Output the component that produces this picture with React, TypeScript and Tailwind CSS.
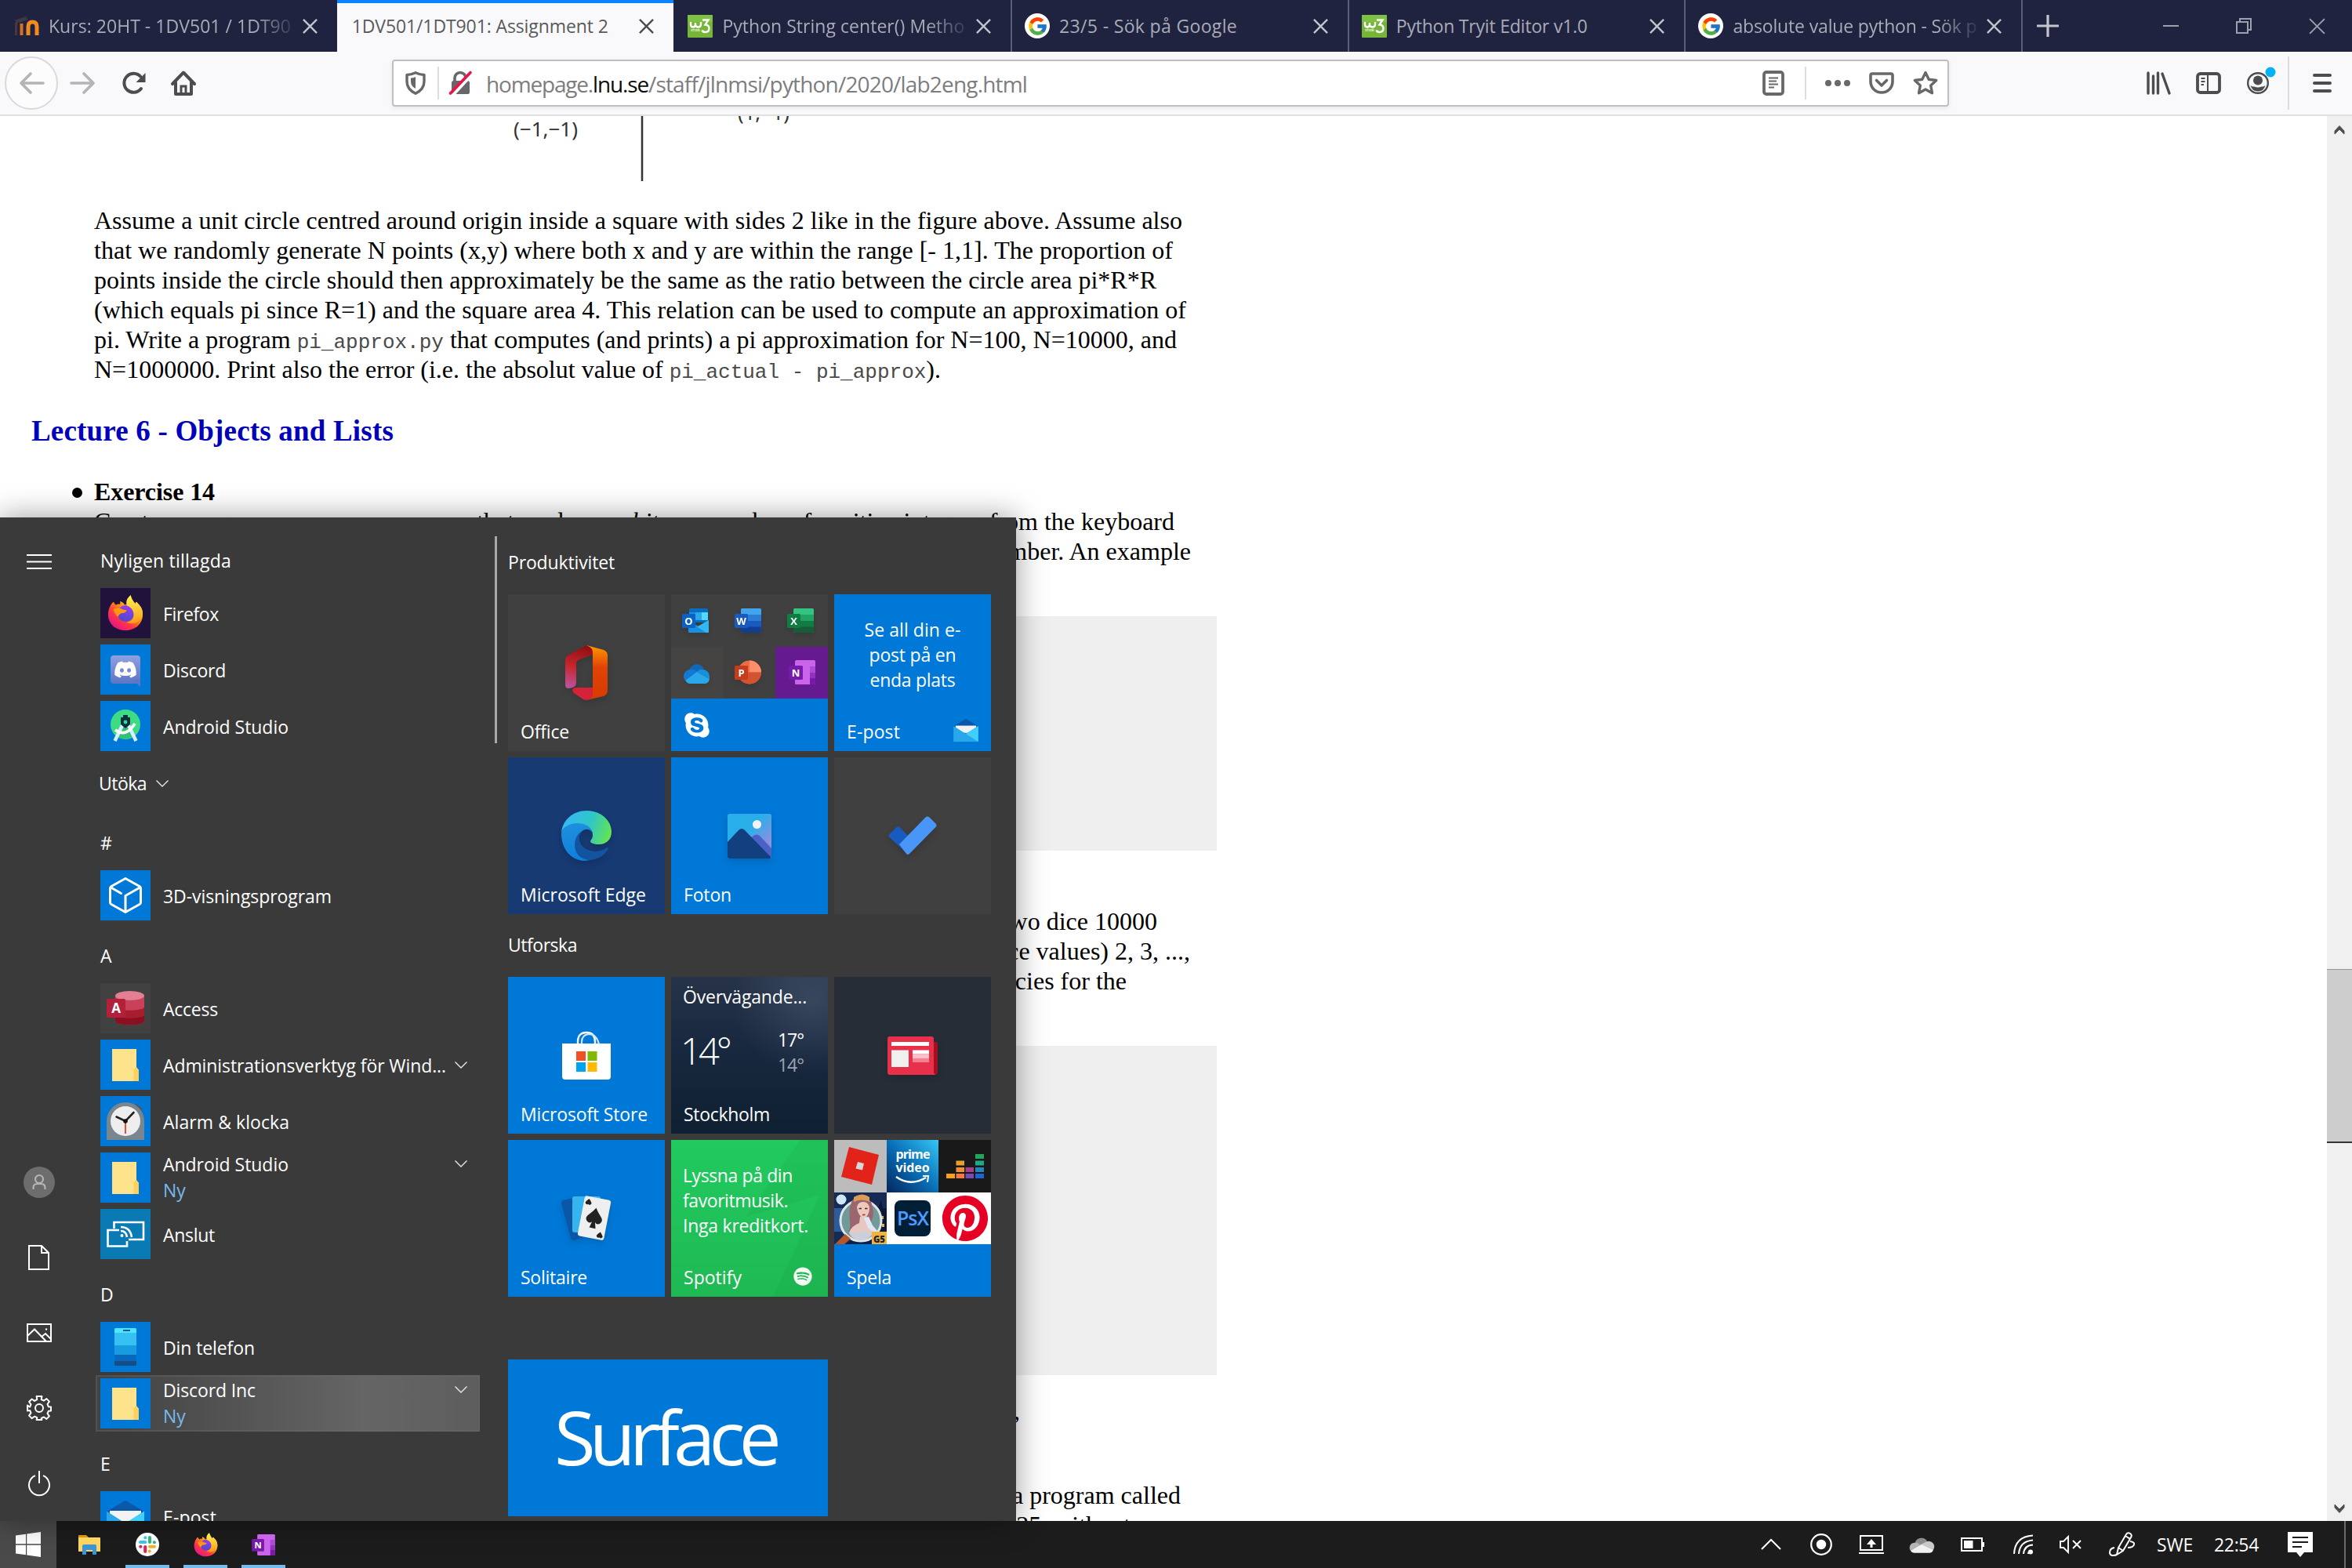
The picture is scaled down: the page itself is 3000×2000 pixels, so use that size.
import React, { useLayoutEffect, useRef, useState } from "react";
import { FcGoogle } from "react-icons/fc";
import { FaDiscord, FaPinterest, FaSkype, FaSpotify } from "react-icons/fa6";

type Kids = { children?: React.ReactNode };

/* Text whose letter spacing is adjusted so that it fills a known width. */
function Fit({ w, className = "", children }: Kids & { w: number; className?: string }) {
  const ref = useRef<HTMLSpanElement>(null);
  const [spacing, setSpacing] = useState(0);
  useLayoutEffect(() => {
    const el = ref.current;
    if (!el) return;
    const n = (el.textContent || "").length;
    setSpacing((w - el.getBoundingClientRect().width) / Math.max(1, n));
  }, [w]);
  return (
    <span ref={ref} className={`inline-block whitespace-pre ${className}`} style={{ letterSpacing: spacing }}>
      {children}
    </span>
  );
}

function Ico({ w, h, vb, className = "", children }: Kids & { w: number; h: number; vb?: string; className?: string }) {
  return (
    <svg width={w} height={h} viewBox={vb || `0 0 ${w} ${h}`} fill="none" className={`block shrink-0 overflow-visible ${className}`}>
      {children}
    </svg>
  );
}

/* ---------- logos ---------- */

function Firefox({ s, id }: { s: number; id: string }) {
  return (
    <Ico w={s} h={s} vb="0 0 48 48">
      <defs>
        <linearGradient id={id + "a"} x1="40" y1="4" x2="10" y2="44" gradientUnits="userSpaceOnUse">
          <stop offset="0.05" stopColor="#fff44f" />
          <stop offset="0.4" stopColor="#ff980e" />
          <stop offset="0.7" stopColor="#ff3647" />
          <stop offset="1" stopColor="#e31587" />
        </linearGradient>
        <linearGradient id={id + "b"} x1="30" y1="10" x2="22" y2="36" gradientUnits="userSpaceOnUse">
          <stop stopColor="#b833e1" />
          <stop offset="0.5" stopColor="#7542e5" />
          <stop offset="1" stopColor="#4a4ac8" />
        </linearGradient>
        <linearGradient id={id + "c"} x1="36" y1="0" x2="38" y2="40" gradientUnits="userSpaceOnUse">
          <stop stopColor="#fff44f" />
          <stop offset="0.6" stopColor="#ffbd2f" />
          <stop offset="1" stopColor="#ff980e" />
        </linearGradient>
      </defs>
      <path d="M8 9c1 1 2 3 3 4 2-1 4-1 6-1l0-4c3 1 5 3 6 5 5-2 9 0 12 4l3-8c6 5 9 11 9 17 0 12-10 21-23 21S1 38 1 26C1 19 4 12 8 9z" fill={`url(#${id}a)`} />
      <circle cx="24.500" cy="24.500" r="11" fill={`url(#${id}b)`} />
      <path d="M31 0c-5 4-7 9-5 14 5 2 9 6 9 12 0 7-5 10-10 10 10 5 22-1 22-12 0-8-5-11-8-15-1 0-1 2-1 3-3-3-6-7-7-12z" fill={`url(#${id}c)`} />
      <path d="M8 19c4-2 9-2 12 0 3 1 5 1 6 1-1 3-4 4-7 4-3 1-4 3-5 5-3-2-5-6-6-10z" fill="#ff980e" />
    </Ico>
  );
}

function OfficeApp({ letter, dark, tones, round }: { letter: string; dark: string; tones: string[]; round?: boolean }) {
  return (
    <Ico w={34} h={31} className="drop-shadow-md">
      {round ? (
        <>
          <circle cx="19" cy="15.500" r="15" fill={tones[0]} />
          <path d="M19 .5a15 15 0 0 1 15 15H19z" fill={tones[1]} />
          <path d="M4 15.500a15 15 0 0 0 30 0z" fill={tones[2]} />
        </>
      ) : (
        <>
          <rect x="8" y="0" width="26" height="31" rx="1.500" fill={tones[0]} />
          <rect x="8" y="8" width="26" height="8" fill={tones[1]} />
          <rect x="8" y="16" width="26" height="8" fill={tones[2]} />
          <rect x="8" y="23.500" width="26" height="7.500" rx="1.500" fill={tones[3]} />
        </>
      )}
      <rect x="0" y="7" width="17" height="18" rx="1.500" fill={dark} />
      <text x="8.500" y="20.800" textAnchor="middle" fontFamily="Open Sans, sans-serif" fontSize="13" fontWeight="700" fill="#fff">
        {letter}
      </text>
    </Ico>
  );
}

function Outlook() {
  return (
    <Ico w={34} h={31} className="drop-shadow-md">
      <rect x="9" y="0" width="24" height="18" rx="1.500" fill="#0a6cbd" />
      <path d="M9 5h8v10H9z" fill="#1490df" />
      <path d="M17 5h8v10h-8z" fill="#28a8ea" />
      <path d="M25 5h8v10h-8z" fill="#50d9ff" />
      <path d="M8 15 21 23 34 15v14.500q0 1.500-1.500 1.500H9.500Q8 31 8 29.500z" fill="#1a8fe0" />
      <path d="M34 15v14.500q0 1.500-1.500 1.500H31L19 23.500z" fill="#35b8f1" />
      <rect x="0" y="7" width="17" height="18" rx="1.500" fill="#0a62c4" />
      <text x="8.500" y="20.800" textAnchor="middle" fontFamily="Open Sans, sans-serif" fontSize="13" fontWeight="700" fill="#fff">
        O
      </text>
    </Ico>
  );
}

function OneNote({ w, h }: { w: number; h: number }) {
  return (
    <Ico w={w} h={h} vb="0 0 34 31">
      <rect x="8" y="0" width="26" height="31" rx="1.500" fill="#ca64ea" />
      <path d="M27 8h7v8h-7z" fill="#ae4bd5" />
      <path d="M27 16h7v7h-7z" fill="#9332bf" />
      <path d="M27 23h7v6.500q0 1.500-1.500 1.500H27z" fill="#7719aa" />
      <rect x="0" y="7" width="18" height="18" rx="1.500" fill="#7719aa" />
      <text x="9" y="20.800" textAnchor="middle" fontFamily="Open Sans, sans-serif" fontSize="13" fontWeight="700" fill="#fff">
        N
      </text>
    </Ico>
  );
}

function Mail({ w, h }: { w: number; h: number }) {
  return (
    <Ico w={w} h={h} vb="0 0 48 44">
      <path d="M0 14 24 0l24 14v6H0z" fill="#0b57a8" />
      <path d="M4 13h40v14H4z" fill="#f3f3f3" />
      <path d="M0 13.500 24 29 48 13.500V44H0z" fill="#28a8ea" />
      <path d="M48 13.500 24 29l24 15z" fill="#3fd0fa" />
    </Ico>
  );
}

function Cloud({ w, h, tones }: { w: number; h: number; tones: string[] }) {
  return (
    <Ico w={w} h={h} vb="0 0 34 23">
      <path d="M8 10a9 9 0 0 1 17-2l-9 6z" fill={tones[0]} />
      <path d="M7 9a7 7 0 0 0-5 11l15-7-6-4z" fill={tones[1]} />
      <path d="M24 7.500a7.500 7.500 0 0 1 9 11l-17-7z" fill={tones[2]} />
      <path d="M2 20 17 11.500l16 7A6 6 0 0 1 27 23H7q-3 0-5-3z" fill={tones[3]} />
    </Ico>
  );
}

function Folder() {
  return (
    <Ico w={34} h={42}>
      <path d="M0 1h31v23l3 4v14H0z" fill="#ffe597" />
      <path d="M0 1h31v41H0z" fill="#ffe28c" />
      <path d="M27.500 42V28l2.500-4 4 4v14z" fill="#ffd05c" />
    </Ico>
  );
}

function W3() {
  return (
    <Ico w={32} h={29}>
      <rect width="32" height="29" rx="1" fill="#76b538" />
      <rect width="32" height="9" rx="1" fill="#7fc142" />
      <path d="M4 9v3q0 3.500 3 3.500t3-3.500v-2 2q0 3.500 3.500 3.500T17 12V9M19 6.500h7.500l-4 6q5 .5 5 4.500 0 5-5 5-3 0-4-2.500" stroke="#fff" strokeWidth="2.400" />
      <text x="4" y="21" fontFamily="Open Sans, sans-serif" fontSize="4.500" fill="#fff" textLength="12">
        schools
      </text>
    </Ico>
  );
}

const GoogleIcon = () => (
  <span className="flex size-8 items-center justify-center rounded-full bg-white">
    <FcGoogle size={27} />
  </span>
);

const Moodle = () => (
  <Ico w={32} h={24}>
    <path d="M2.500 24V11q0-4 3-6" stroke="#5a4340" strokeWidth="3" opacity=".7" />
    <path d="M0 5 15 0l3 4-11 4z" fill="#3b3744" />
    <path d="M9.500 24V9" stroke="#d9701f" strokeWidth="4" />
    <path d="M18 24V13q0-6 5.500-6t5.500 6v11" stroke="#f28a1d" strokeWidth="5" />
  </Ico>
);

/* ---------- browser ---------- */

const Cross = ({ c, s = 19, sw = 2.5 }: { c: string; s?: number; sw?: number }) => (
  <Ico w={s} h={s} vb="0 0 20 20">
    <path d="M1 1l18 18M19 1 1 19" stroke={c} strokeWidth={sw} />
  </Ico>
);

function Tab({ icon, text, w, active, sep, fade }: { icon?: React.ReactNode; text: string; w: number; active?: boolean; sep?: boolean; fade?: boolean }) {
  return (
    <div
      className={
        "relative flex h-full w-[429.7px] shrink-0 items-center " +
        (active ? "border-t-4 border-[#0a84ff] bg-[#f9f9fb] pb-1 pl-[19px] text-[#5a5a5c]" : "pl-[18px] text-[#aaaab8]")
      }
    >
      {sep && <div className="absolute left-0 top-0 h-full w-[2px] bg-[#5c5e78]" />}
      {icon && <div className="mr-3 flex w-8 shrink-0 justify-center">{icon}</div>}
      <div className={"w-[332px] " + (fade ? "[mask-image:linear-gradient(to_right,black_79%,transparent_96%)]" : "")}>
        <Fit w={w}>{text}</Fit>
      </div>
      <div className="absolute right-[25px]">
        <Cross c={active ? "#4c4c4e" : "#c4c4cd"} />
      </div>
    </div>
  );
}

function TabBar() {
  return (
    <div className="flex h-[66px] shrink-0 items-center bg-[#20233f] text-[23px] leading-8">
      <Tab icon={<Moodle />} text="Kurs: 20HT - 1DV501 / 1DT90" w={309} fade />
      <Tab text="1DV501/1DT901: Assignment 2" w={327} active />
      <Tab icon={<W3 />} text="Python String center() Metho" w={309} fade />
      <Tab icon={<GoogleIcon />} text="23/5 - Sök på Google" w={227} sep />
      <Tab icon={<W3 />} text="Python Tryit Editor v1.0" w={244} sep />
      <Tab icon={<GoogleIcon />} text="absolute value python - Sök p" w={311} sep fade />
      <div className="relative flex h-full flex-1 items-center border-l-2 border-[#5c5e78] pl-[18px]">
        <Ico w={28} h={28}>
          <path d="M14 0v28M0 14h28" stroke="#c4c4cd" strokeWidth="3.200" />
        </Ico>
        <div className="ml-auto flex items-center gap-[73px] pr-[34px]">
          <Ico w={20} h={20}>
            <path d="M0 10h20" stroke="#9fa0ae" strokeWidth="2" />
          </Ico>
          <Ico w={20} h={20}>
            <path d="M1 5h14v14H1zM5 5V1h14v14h-4" stroke="#9fa0ae" strokeWidth="2" />
          </Ico>
          <Cross c="#9fa0ae" s={21} sw={1.8} />
        </div>
      </div>
    </div>
  );
}

const G = "#4c4c4e";
const H = "#68686a";

function NavBar() {
  return (
    <div className="flex h-[82px] shrink-0 items-center border-b-2 border-[#e0e0e1] bg-[#f9f9fb]">
      <div className="ml-[6px] flex size-[68px] items-center justify-center rounded-full border-2 border-[#d9d9dc] bg-[#fcfcfd]">
        <Ico w={32} h={28}>
          <path d="M31 14H3M15 2 3 14l12 12" stroke="#b4b4b7" strokeWidth="3.600" strokeLinecap="round" strokeLinejoin="round" />
        </Ico>
      </div>
      <Ico w={32} h={28} className="ml-4">
        <path d="M1 14h28M17 2l12 12-12 12" stroke="#b4b4b7" strokeWidth="3.600" strokeLinecap="round" strokeLinejoin="round" />
      </Ico>
      <Ico w={30} h={28} className="ml-[34px]">
        <path d="M24 21A12 12 0 1 1 23.500 6" stroke={G} strokeWidth="4" strokeLinecap="round" />
        <path d="M29.500 1v12h-12z" fill={G} />
      </Ico>
      <Ico w={32} h={32} className="ml-8">
        <path d="M2 17 16 2.500 30 17M6 15v15h20V15" stroke={G} strokeWidth="4" strokeLinecap="round" strokeLinejoin="round" />
        <path d="M13 31V20h6v11" stroke={G} strokeWidth="3" />
      </Ico>
      <div className="ml-[250px] flex h-[60px] w-[1986px] items-center rounded-[4px] border-2 border-[#bfbfc1] bg-white shadow-[0_2px_6px_rgba(0,0,0,0.08)]">
        <Ico w={26} h={30} className="ml-[15px]">
          <path d="M13 1.800Q19 4.500 24 4.500V13q0 10-11 15.200Q2 23 2 13V4.500q5 0 11-2.700z" stroke={H} strokeWidth="3.400" strokeLinejoin="round" />
          <path d="M13 7v15q-6-3-6-9V8.500q3 0 6-1.500z" fill={H} />
        </Ico>
        <div className="ml-[15px] h-[42px] w-[2px] bg-[#dedee0]" />
        <Ico w={30} h={32} className="ml-[13px]">
          <path d="M7 15V9.500a7 7 0 0 1 14 0V15" stroke={H} strokeWidth="3.600" />
          <rect x="3" y="13" width="23" height="17" rx="2.500" fill={H} />
          <path d="M4 32 29 5" stroke="#fff" strokeWidth="4" />
          <path d="M1.500 29 27 2.500" stroke="#e8154a" strokeWidth="3.600" strokeLinecap="round" />
        </Ico>
        <div className="ml-[17px] pt-[2px] text-[28px] leading-10 text-[#7d7d80]">
          <Fit w={136}>homepage.</Fit>
          <Fit w={71} className="text-[#0c0c0d]">
            lnu.se
          </Fit>
          <Fit w={483}>/staff/jlnmsi/python/2020/lab2eng.html</Fit>
        </div>
        <div className="ml-auto flex items-center">
          <Ico w={28} h={32}>
            <rect x="2" y="2" width="24" height="28" rx="3" stroke={H} strokeWidth="3.800" />
            <path d="M8 9.500h12M8 13.500h10M8 17.500h12M8 21.500h7" stroke={H} strokeWidth="2" />
          </Ico>
          <div className="ml-[26px] h-[42px] w-[2px] bg-[#dedee0]" />
          <Ico w={32} h={8} className="ml-6">
            <circle cx="4" cy="4" r="4" fill={H} />
            <circle cx="16" cy="4" r="4" fill={H} />
            <circle cx="28" cy="4" r="4" fill={H} />
          </Ico>
          <Ico w={32} h={28} className="ml-6">
            <path d="M4 2h24q2 0 2 2v8a14 14 0 0 1-28 0V4q0-2 2-2z" stroke={H} strokeWidth="3.600" />
            <path d="M9.500 10.500 16 17l6.500-6.500" stroke={H} strokeWidth="3.600" strokeLinecap="round" strokeLinejoin="round" />
          </Ico>
          <Ico w={32} h={32} className="ml-6 mr-3">
            <path d="m16 2.500 4.200 8.700 9.500 1.300-7 6.600 1.800 9.600L16 24l-8.500 4.700 1.800-9.600-7-6.600 9.500-1.300z" stroke={H} strokeWidth="3.400" strokeLinejoin="round" />
          </Ico>
        </div>
      </div>
      <div className="ml-auto flex items-center">
        <Ico w={31} h={28}>
          <path d="M2 1v26M8.500 5v22M14.500 1v26M20 2l9 25" stroke={G} strokeWidth="3.400" strokeLinecap="round" />
        </Ico>
        <Ico w={32} h={28} className="ml-8">
          <rect x="2" y="2" width="28" height="24" rx="3.500" stroke={G} strokeWidth="3.800" />
          <path d="M15 3v22" stroke={G} strokeWidth="2" />
          <path d="M6.500 8h5M6.500 12h5M6.500 16h3.500" stroke={G} strokeWidth="2" />
        </Ico>
        <Ico w={30} h={28} className="ml-[33px]">
          <circle cx="14" cy="14" r="12.800" stroke={G} strokeWidth="2.400" />
          <circle cx="14" cy="10.500" r="6" fill={G} />
          <path d="M4.500 17q3 2 5 1.500 4.500 2 9 0 2 .5 5-1.500-2 7.500-9.500 7.500T4.500 17z" fill={G} />
          <circle cx="30" cy="0" r="6.500" fill="#00b3f4" />
        </Ico>
        <div className="ml-[22px] h-[68px] w-[2px] bg-[#dcdcde]" />
        <Ico w={24} h={26} className="ml-[30px] mr-[26px]">
          <path d="M2 3h20M2 13h20M2 23h20" stroke={G} strokeWidth="4" strokeLinecap="round" />
        </Ico>
      </div>
    </div>
  );
}

const Code = ({ children }: Kids) => <code className="font-['Liberation_Mono',monospace] text-[26px] leading-none text-[#4a4a4a]">{children}</code>;

function Page() {
  return (
    <div className="flex min-h-0 flex-1 bg-white">
      <div className="flex-1 overflow-hidden font-['Liberation_Serif',serif] text-[32px] leading-[38px] text-black">
        <Ico w={1100} h={114} className="overflow-hidden!">
          <text x="655" y="26" fontFamily="Noto Sans, sans-serif" fontSize="25" textLength="82" lengthAdjust="spacingAndGlyphs" fill="#333">
            (−1,−1)
          </text>
          <text x="941" y="5" fontFamily="Noto Sans, sans-serif" fontSize="25" textLength="66" lengthAdjust="spacingAndGlyphs" fill="#333">
            (1,−1)
          </text>
          <path d="M819 0v83" stroke="#333" strokeWidth="2.500" />
        </Ico>
        <div className="ml-[120px]">
          <div className="h-[38px]"><Fit w={1388}>Assume a unit circle centred around origin inside a square with sides 2 like in the figure above. Assume also</Fit></div>
          <div className="h-[38px]"><Fit w={1376}>that we randomly generate N points (x,y) where both x and y are within the range [- 1,1]. The proportion of</Fit></div>
          <div className="h-[38px]"><Fit w={1355}>points inside the circle should then approximately be the same as the ratio between the circle area pi*R*R</Fit></div>
          <div className="h-[38px]"><Fit w={1393}>(which equals pi since R=1) and the square area 4. This relation can be used to compute an approximation of</Fit></div>
          <div className="h-[38px]"><Fit w={1381}>pi. Write a program <Code>pi_approx.py</Code> that computes (and prints) a pi approximation for N=100, N=10000, and</Fit></div>
          <div className="h-[38px]"><Fit w={1080}>N=1000000. Print also the error (i.e. the absolut value of <Code>pi_actual - pi_approx</Code>).</Fit></div>
        </div>
        <h2 className="mb-[36px] ml-10 mt-[38px] h-[44px] text-[37px] font-bold leading-[44px] text-[#0000bb]"><Fit w={462}>Lecture 6 - Objects and Lists</Fit></h2>
        <div className="ml-[92px] flex h-[38px] items-center">
          <div className="mt-[3px] size-[13px] rounded-full bg-black" />
          <b className="ml-[15px]"><Fit w={154}>Exercise 14</Fit></b>
        </div>
        <div className="ml-[120px] flex h-[38px] w-[1378px] justify-between">
          <span>Create a program</span>
          <Fit w={890}>that reads an <i>arbitrary</i> number of positive integers from the keyboard</Fit>
        </div>
        <div className="ml-[120px] h-[38px] w-[1399px] text-right">number. An example</div>
        <div className="ml-[120px] mt-[64px] h-[299px] w-[1432px] bg-[#efefef]" />
        <div className="ml-[120px] mt-[71px] h-[38px] w-[1356px] text-right">two dice 10000</div>
        <div className="ml-[120px] h-[38px] w-[1398px] text-right">dice values) 2, 3, ...,</div>
        <div className="ml-[120px] h-[38px] w-[1317px] text-right">frequencies for the</div>
        <div className="ml-[120px] mt-[64px] h-[420px] w-[1432px] bg-[#efefef]" />
        <div className="ml-[120px] mt-[26px] h-[38px] w-[1181px] text-right">,</div>
        <div className="ml-[120px] mt-[70px] h-[38px] w-[1386px] text-right">a program called</div>
        <div className="ml-[120px] h-[38px] w-[1322px] text-right">35, without</div>
      </div>
      <div className="flex w-8 flex-col items-center bg-[#f0f0f0]">
        <Ico w={14} h={12} className="mt-[12px]">
          <path d="M1 11V7l6-6.500L13 7v4L7 5z" fill="#505050" stroke="#505050" />
        </Ico>
        <div className="mt-[1064px] h-[222px] w-8 border-b-2 border-t border-b-[#333] border-t-[#999] bg-[#cdcdcd]" />
        <Ico w={14} h={12} className="mt-auto mb-[10px]">
          <path d="M1 1v4l6 6.500L13 5V1L7 7z" fill="#505050" stroke="#505050" />
        </Ico>
      </div>
    </div>
  );
}

/* ---------- start menu ---------- */

function Rail() {
  return (
    <div className="flex w-[100px] shrink-0 flex-col items-center">
      <Ico w={32} h={20} className="mt-[46px]">
        <path d="M0 2h32M0 10.500h32M0 19h32" stroke="#fff" strokeWidth="2" />
      </Ico>
      <div className="mt-auto flex flex-col items-center">
        <div className="flex h-24 items-center">
          <div className="flex size-10 items-center justify-center rounded-full bg-[#6d6d6d]">
            <Ico w={18} h={20}>
              <circle cx="9" cy="6" r="5" stroke="#b5b5b5" strokeWidth="2.200" />
              <path d="M1.500 19v-2q0-5 5-5h5q5 0 5 5v2" stroke="#b5b5b5" strokeWidth="2.200" />
            </Ico>
          </div>
        </div>
        <div className="flex h-24 items-center">
          <Ico w={28} h={32} className="mr-[2px]">
            <path d="M2 1h16l9 9v21H2zM18 1v9h9" stroke="#fff" strokeWidth="2" />
          </Ico>
        </div>
        <div className="flex h-24 items-center">
          <Ico w={32} h={24}>
            <path d="M1 1h30v22H1zM1 16l9-8.500L25 23M19 17l5-4 7 7" stroke="#fff" strokeWidth="2" />
            <circle cx="25" cy="7.500" r="1.200" fill="#fff" />
          </Ico>
        </div>
        <div className="flex h-24 items-center">
          <Ico w={32} h={32}>
            <path
              d="M13.3 5.100 12.600 1h6.800L18.700 5.100l3.300 1.400 3.400-2.400 3.500 3.500-2.400 3.400 1.400 3.300 3.100.3v4.800l-3.100.3-1.400 3.300 2.400 3.400-3.500 3.500-3.400-2.400-3.300 1.400L19.400 31h-6.800l.7-2.900-3.300-1.400-3.400 2.400-3.500-3.500 2.400-3.400-1.400-3.300L1 19.400v-6.800l3.100 2.100 1.400-3.300-2.400-3.400 3.500-3.500 3.400 2.400z"
              stroke="#fff"
              strokeWidth="2"
              strokeLinejoin="round"
            />
            <circle cx="16" cy="16" r="5" stroke="#fff" strokeWidth="2" />
          </Ico>
        </div>
        <div className="flex h-24 items-center">
          <Ico w={28} h={32}>
            <path d="M9 6.200a13 13 0 1 0 10 0M14 0v16" stroke="#fff" strokeWidth="2" />
          </Ico>
        </div>
      </div>
    </div>
  );
}

const Chevron = () => (
  <Ico w={16} h={9}>
    <path d="M.5.5 8 8 15.500.5" stroke="#e8e8e8" strokeWidth="1.400" />
  </Ico>
);

function Letter({ children, w }: { children: string; w: number }) {
  return (
    <div className="flex h-[72px] shrink-0 items-center pt-[10px]">
      <Fit w={w}>{children}</Fit>
    </div>
  );
}

function AppRow({ icon, name, w, bg = "bg-[#0078d7]", sub, chevron, hover }: { icon: React.ReactNode; name: string; w: number; bg?: string; sub?: string; chevron?: boolean; hover?: boolean }) {
  return (
    <div
      className={
        "-ml-[6px] flex h-[72px] w-[490px] shrink-0 items-center pl-[6px] " +
        (hover ? "bg-linear-to-r from-[#424242] via-[#656565] via-70% to-[#5d5d5d] shadow-[inset_0_0_0_2px_rgba(110,110,110,0.35)]" : "")
      }
    >
      <div className={"flex size-16 shrink-0 items-center justify-center overflow-hidden " + bg}>{icon}</div>
      <div className={"ml-4 flex flex-col leading-[33px] " + (sub ? "" : "pt-[2px]")}>
        <Fit w={w}>{name}</Fit>
        {sub && <span className="text-[#76b9ed]">{sub}</span>}
      </div>
      {chevron && (
        <div className={"ml-auto mr-4 " + (sub ? "mb-9" : "")}>
          <Chevron />
        </div>
      )}
    </div>
  );
}

function AppList() {
  return (
    <div className="flex w-[531px] shrink-0 flex-col overflow-hidden pl-7 pt-[14px]">
      <Letter w={167}>Nyligen tillagda</Letter>
      <AppRow icon={<Firefox s={46} id="m" />} bg="bg-[#20123a]" name="Firefox" w={71} />
      <AppRow
        icon={
          <div className="relative flex h-9 w-[38px] items-center justify-center rounded-[4px] bg-linear-to-b from-[#8ea1e1] to-[#5f74c4]">
            <FaDiscord size={30} color="#fff" />
            <Ico w={10} h={9} className="absolute -bottom-[4px] right-0">
              <path d="M0 0h10v9z" fill="#5f74c4" />
            </Ico>
          </div>
        }
        name="Discord"
        w={80}
      />
      <AppRow
        icon={
          <Ico w={40} h={42}>
            <circle cx="20" cy="19" r="19" fill="#3ddc84" />
            <path d="M20 10 8 34q12 8 24-2z" fill="#2fae71" opacity=".6" />
            <path d="M17 18 6.500 40M23 18l10.500 22" stroke="#d7effe" strokeWidth="4.500" />
            <path d="M7 26q14 10 25-8" stroke="#fff" strokeWidth="3.600" />
            <path d="M14 10h3V7h6v3h3v9l-6 5-6-5z" fill="#073042" />
            <circle cx="20" cy="16" r="2.400" fill="#3ddc84" />
          </Ico>
        }
        name="Android Studio"
        w={160}
      />
      <div className="flex h-[72px] shrink-0 items-center pt-[2px]">
        <Fit w={61} className="-ml-[2px]">Utöka</Fit>
        <div className="ml-[12px]">
          <Chevron />
        </div>
      </div>
      <Letter w={14}>#</Letter>
      <AppRow
        icon={
          <Ico w={42} h={48}>
            <path d="M21 2.500 39 12.500q1.500 1 1.500 2.500v18q0 1.500-1.500 2.500L21 45.500 3 35.500Q1.500 34.500 1.500 33V15q0-1.500 1.500-2.500zM2.500 14l13 7.500M39.500 14 21 24.500V45" stroke="#fff" strokeWidth="3" strokeLinecap="round" strokeLinejoin="round" />
          </Ico>
        }
        name="3D-visningsprogram"
        w={215}
      />
      <Letter w={16}>A</Letter>
      <AppRow
        bg="bg-[#414141]"
        icon={
          <Ico w={48} h={46}>
            <path d="M11 7v32c0 7 37 7 37 0V7z" fill="#c8405a" />
            <path d="M11 22c5 5 32 5 37 0v17c0 7-37 7-37 0z" fill="#a81c30" />
            <path d="M11 32c5 5 32 5 37 0v7c0 7-37 7-37 0z" fill="#8a0f22" />
            <ellipse cx="29.500" cy="7" rx="18.500" ry="6" fill="#e27f93" />
            <rect x="0" y="11" width="24" height="24" rx="2" fill="#b2203a" />
            <text x="12" y="29" textAnchor="middle" fontFamily="Open Sans, sans-serif" fontWeight="700" fontSize="17" fill="#fff">A</text>
          </Ico>
        }
        name="Access"
        w={70}
      />
      <AppRow icon={<Folder />} name="Administrationsverktyg för Wind..." w={361} chevron />
      <AppRow
        icon={
          <Ico w={48} h={48}>
            <path d="M38 2 46 8l-4 5-8-7z" fill="#4b5a66" />
            <path d="M0 24a24 24 0 0 1 48 0v24H0z" fill="#79858f" />
            <circle cx="24" cy="24" r="19" fill="#eeeeee" />
            <path d="M24 24v16" stroke="#e0401f" strokeWidth="1.800" />
            <path d="M12.500 18.500 24 24l10.500-11" stroke="#222" strokeWidth="2.600" strokeLinecap="round" />
            <circle cx="24" cy="24" r="2.800" fill="#111" />
          </Ico>
        }
        name="Alarm & klocka"
        w={161}
      />
      <AppRow icon={<Folder />} name="Android Studio" w={160} sub="Ny" chevron />
      <AppRow
        bg="bg-[#0a7ab5]"
        icon={
          <Ico w={48} h={34}>
            <path d="M9.500 10V2h37.500v22H28" stroke="#fff" strokeWidth="2.600" />
            <path d="M16 12H1.500v20.500H26V26" stroke="#fff" strokeWidth="2.600" />
            <circle cx="19.500" cy="19" r="2" fill="#fff" />
            <path d="M18 13q7 0 8 8M18 8q12 0 14 13" stroke="#fff" strokeWidth="2.600" />
          </Ico>
        }
        name="Anslut"
        w={66}
      />
      <Letter w={16}>D</Letter>
      <AppRow
        icon={
          <Ico w={28} h={48}>
            <rect width="28" height="48" rx="1.500" fill="#50e6ff" />
            <path d="M0 6h28v16H0z" fill="#35c1f1" />
            <path d="M0 22h28v12H0z" fill="#199be2" />
            <path d="M0 34h28v8H0z" fill="#0669bc" />
            <path d="M0 42h28v6H0z" fill="#154d86" />
            <path d="M11 3h9" stroke="#185a97" strokeWidth="2" />
          </Ico>
        }
        name="Din telefon"
        w={117}
      />
      <AppRow icon={<Folder />} name="Discord Inc" w={118} sub="Ny" chevron hover />
      <Letter w={13}>E</Letter>
      <AppRow icon={<div className="pt-1"><Mail w={48} h={44} /></div>} name="E-post" w={68} />
    </div>
  );
}

function Tile({ bg = "bg-[#0078d7]", label, w = 0, children }: Kids & { bg?: string; label?: string; w?: number }) {
  return (
    <div className={"relative size-[200px] overflow-hidden " + bg}>
      {children}
      {label && (
        <div className="absolute bottom-[9px] left-4 leading-8">
          <Fit w={w}>{label}</Fit>
        </div>
      )}
    </div>
  );
}

const Center = ({ children }: Kids) => <div className="flex size-full items-center justify-center">{children}</div>;
const Cell = ({ bg = "", children }: Kids & { bg?: string }) => <div className={"flex items-center justify-center overflow-hidden " + bg}>{children}</div>;

function Productivity() {
  return (
    <div className="grid grid-cols-[200px_200px_200px] gap-2">
      <Tile bg="bg-[#404040]" label="Office" w={62}>
        <Center>
          <Ico w={56} h={70} className="drop-shadow-lg">
            <defs>
              <linearGradient id="ofA" x1="20" y1="0" x2="5" y2="56" gradientUnits="userSpaceOnUse">
                <stop stopColor="#8f0f12" />
                <stop offset="0.5" stopColor="#c8262c" />
                <stop offset="1" stopColor="#b957a8" />
              </linearGradient>
              <linearGradient id="ofB" x1="45" y1="0" x2="45" y2="70" gradientUnits="userSpaceOnUse">
                <stop stopColor="#ff9a00" />
                <stop offset="0.4" stopColor="#e04305" />
                <stop offset="1" stopColor="#d83b01" />
              </linearGradient>
            </defs>
            <path d="M28 0 4 13q-3 2-3 6v31q0 5 4 5 10-1 10-7V24q0-4 4-6l17-6V3z" fill="url(#ofA)" />
            <path d="M28 0 50 6q5 2 5 7v44q0 6-5 8l-22 5q8-3 8-9V9q0-6-8-9z" fill="url(#ofB)" />
            <path d="M11 55q2-1 5-1h20v7q0 8-8 9-2 0-4-1l-12-8q-3-3-1-6z" fill="#d6213a" />
          </Ico>
        </Center>
      </Tile>
      <Tile>
        <div className="grid size-full grid-cols-3 grid-rows-3">
          <Cell bg="bg-[#404040] pr-1"><Outlook /></Cell>
          <Cell bg="bg-[#404040] pr-1"><OfficeApp letter="W" dark="#185abd" tones={["#41a5ee", "#2b7cd3", "#185abd", "#103f91"]} /></Cell>
          <Cell bg="bg-[#404040] pr-1"><OfficeApp letter="X" dark="#107c41" tones={["#33c481", "#21a366", "#107c41", "#185c37"]} /></Cell>
          <Cell bg="bg-[#454443]">
            <Ico w={34} h={29} className="drop-shadow-md">
              <path d="M7 13a10 10 0 0 1 19-3q-6 0-9 5z" fill="#0f68b8" />
              <path d="M8 11q5-1 11 4L2 25Q-1 22 .500 17 2 12 8 11z" fill="#1478d0" />
              <path d="M17 14q5-6 11-2 6 3 5 11l-16-9z" fill="#1490df" />
              <path d="m17 14 16 9q-1 6-7 6H7q-3-1-5-4z" fill="#28a8ea" />
            </Ico>
          </Cell>
          <Cell bg="bg-[#404040] pr-1"><OfficeApp letter="P" dark="#c43e1c" round tones={["#ed6c47", "#ff8f6b", "#d35230"]} /></Cell>
          <Cell bg="bg-[#651a8f]"><OneNote w={34} h={31} /></Cell>
          <Cell><FaSkype size={36} color="#fff" /></Cell>
        </div>
      </Tile>
      <Tile label="E-post" w={68}>
        <div className="flex flex-col items-center pt-[29px] leading-8">
          <Fit w={123}>Se all din e-</Fit>
          <Fit w={111}>post på en</Fit>
          <Fit w={109}>enda plats</Fit>
        </div>
        <div className="absolute bottom-[12px] right-4"><Mail w={32} h={29} /></div>
      </Tile>
      <Tile bg="bg-[#173a73]" label="Microsoft Edge" w={160}>
        <Center>
          <Ico w={64} h={64} className="drop-shadow-lg">
            <defs>
              <linearGradient id="edA" x1="4" y1="16" x2="62" y2="36" gradientUnits="userSpaceOnUse">
                <stop stopColor="#35b9f1" />
                <stop offset="0.5" stopColor="#2fc6c8" />
                <stop offset="1" stopColor="#66e64a" />
              </linearGradient>
              <linearGradient id="edB" x1="16" y1="14" x2="24" y2="64" gradientUnits="userSpaceOnUse">
                <stop stopColor="#1e90dd" />
                <stop offset="1" stopColor="#0f7fdc" />
              </linearGradient>
            </defs>
            <path d="M0 29C1 12 15 0 32 0c19 0 32 13 32 27 0 10-7 16-16 16-7 0-11-2-11-4 0-1 3-3 3-8 0-8-8-14-20-14C8 17 1 23 0 29z" fill="url(#edA)" />
            <path d="M0 29c1-6 9-13 20-13 10 0 18 4 20 12-3-4-7-5-10-4-6 2-9 10-9 17 2 12 12 18 20 19-3 3-8 4-12 4C12 63 0 49 0 29z" fill="url(#edB)" />
            <path d="M26 26c-5 5-5 19 8 24 9 4 19 1 24-3 2-1 2 1 1 3-5 8-14 13-24 13-11-1-18-9-18-19 0-8 4-15 9-18z" fill="#1254a0" />
          </Ico>
        </Center>
      </Tile>
      <Tile label="Foton" w={61}>
        <Center>
          <Ico w={56} h={57} className="drop-shadow-lg">
            <defs>
              <linearGradient id="ph" x1="0" y1="0" x2="56" y2="57" gradientUnits="userSpaceOnUse">
                <stop offset="0.4" stopColor="#28afea" />
                <stop offset="0.8" stopColor="#8e8fe0" />
              </linearGradient>
              <clipPath id="phc"><rect width="56" height="57" rx="2.500" /></clipPath>
            </defs>
            <g clipPath="url(#phc)">
              <rect width="56" height="57" fill="url(#ph)" />
              <path d="m20 40 13-12q4-3 8 0l15 16v13H20z" fill="#4a62c8" />
              <path d="M0 36 14 21q4-4 8 0l33 34v2H0z" fill="#123f80" />
              <circle cx="37.500" cy="13.500" r="5.500" fill="#f3f3f3" />
            </g>
          </Ico>
        </Center>
      </Tile>
      <Tile bg="bg-[#404040]">
        <Center>
          <Ico w={62} h={50} className="drop-shadow-lg">
            <path d="m1.500 23 9-9q2-2 4 0L36 36 25.500 49 1.500 27q-2-2 0-4z" fill="#185abd" />
            <path d="M14 36 47.500 1.500q2.500-2 5 0l8 8q2 2.500 0 4.500L27 48q-2 2-4 0z" fill="#4a96f8" />
          </Ico>
        </Center>
      </Tile>
    </div>
  );
}

function Game() {
  return (
    <Ico w={67} h={67}>
      <rect width="67" height="67" fill="#152a55" />
      <circle cx="9" cy="9" r="6.500" fill="#cfe6f5" />
      <path d="M0 20h12v30H0z" fill="#2d5c9c" />
      <path d="M50 20h6l4-10 2 10h5v30H50z" fill="#0c1838" />
      <path d="M53 24h3v4h-3zM60 30h3v4h-3zM61 40h3v4h-3z" fill="#e0b84a" />
      <path d="M14 67h53V56H30z" fill="#0f1f45" />
      <circle cx="34" cy="36" r="26" fill="#6f9a98" stroke="#dfe6e8" strokeWidth="3" />
      <path d="M0 67 14 53l7 6-9 8z" fill="#b4562a" />
      <path d="M23 10q12-13 24 2 6 14 0 26l3 12H18q3-4 2-14-2-14 3-26z" fill="#9c6670" />
      <path d="M25 6q11-7 20 0v6q-10-5-20 0z" fill="#d99b55" />
      <path d="M29 19q1-7 8-7t8 8q0 9-7 14-8-5-9-15z" fill="#ecc9ba" />
      <path d="M31.500 20.500h3.500M39 20.500h3.500" stroke="#4a2b2b" strokeWidth="1.400" />
      <path d="M36 28.500h3.500" stroke="#b8303a" strokeWidth="1.600" />
      <path d="M33 31h8l1 8q9 5 9 12-7 10-17 10T19 52q2-9 13-13z" fill="#e6c8c0" />
      <path d="M20 51q8 2 14-1l16 1q-7 10-16 10T20 51z" fill="#c9cfdb" />
      <path d="m38 32 6-1 5 11 7 8-4 3-9-8z" fill="#dfe7f2" />
      <rect x="48" y="50" width="19" height="17" fill="#f3b436" />
      <text x="57.500" y="63.500" textAnchor="middle" fontFamily="Open Sans, sans-serif" fontWeight="800" fontSize="13" textLength="15" lengthAdjust="spacingAndGlyphs" fill="#1b2338">G5</text>
    </Ico>
  );
}

function Explore() {
  return (
    <div className="grid grid-cols-[200px_200px_200px] gap-2">
      <Tile label="Microsoft Store" w={162}>
        <Center>
          <Ico w={62} h={62}>
            <path d="M20 17V14q0-12 11-12t11 12v3" stroke="#fff" strokeWidth="2.400" />
            <path d="M25 17v-3q0-9 9-10 10 0 13 13" stroke="#cfe6fa" strokeWidth="2.200" />
            <path d="M0 16h62v42q0 4-4 4H4q-4 0-4-4z" fill="#fff" />
            <path d="M18 26h12v12H18z" fill="#f25022" />
            <path d="M32.500 26h12v12h-12z" fill="#7fba00" />
            <path d="M18 40h12v12H18z" fill="#00a4ef" />
            <path d="M32.500 40h12v12h-12z" fill="#ffb900" />
          </Ico>
        </Center>
      </Tile>
      <Tile bg="bg-linear-to-b from-[#263349] via-[#17273d] to-[#0f2032]" label="Stockholm" w={110}>
        <div className="absolute inset-0 bg-[radial-gradient(ellipse_at_90%_15%,rgba(110,125,150,0.3),transparent_40%)]" />
        <div className="relative px-[15px] pt-[9px]">
          <div className="leading-8"><Fit w={158}>Övervägande...</Fit></div>
          <div className="mt-[20px] flex justify-between pr-4">
            <Fit w={62} className="-ml-[3px] text-[47px] font-light leading-[66px]">14°</Fit>
            <div className="flex flex-col pt-[3px] leading-8">
              <Fit w={33}>17°</Fit>
              <Fit w={33} className="text-[#9aa3b0]">14°</Fit>
            </div>
          </div>
        </div>
      </Tile>
      <Tile bg="bg-[#262d37]">
        <Center>
          <Ico w={64} h={49} className="drop-shadow-lg">
            <path d="M50 7h12q2 0 2 2v36q0 4-4 4H50z" fill="#a50f22" />
            <path d="M3 0h53q3 0 3 3v42q0 3 3 4H3q-3 0-3-3V3q0-3 3-3z" fill="#e8304a" />
            <path d="M5 7h48v5H5z" fill="#fff" />
            <path d="M5 17.500h22v21.500H5z" fill="#f0f0f0" />
            <path d="M32 17.500h21v5H32z" fill="#fff" />
            <path d="M32 22.500h21v5.500H32z" fill="#fbc0c8" />
            <path d="M32 28h21v5H32z" fill="#f4808f" />
          </Ico>
        </Center>
      </Tile>
      <Tile label="Solitaire" w={85}>
        <Center>
          <Ico w={64} h={56} className="drop-shadow-lg">
            <path d="M2 5 16 2l12 50-13 4q-2 0-3-3L0 9q0-3 2-4z" fill="#0a57a8" />
            <path d="M17 0h30q3 0 3 3v43H17q-3 0-3-3V3q0-3 3-3z" fill="#35b4f0" />
            <g transform="rotate(11 44 28)">
              <rect x="25" y="2" width="34" height="52" rx="3" fill="#efefef" />
              <path d="M42 15q3 5 8 10 4 4 1 8-4 4-7 0l2 8h-8l2-8q-3 4-7 0-3-4 1-8 5-5 8-10z" fill="#222" />
              <path d="M31 5q4 4 4 6-2 3-4 1-2 2-4-1 0-2 4-6zM53 44q4 4 4 6-2 3-4 1-2 2-4-1 0-2 4-6z" fill="#222" />
            </g>
          </Ico>
        </Center>
      </Tile>
      <Tile bg="bg-linear-to-b from-[#21ca5e] to-[#1fb954]" label="Spotify" w={74}>
        <Ico w={200} h={200} className="absolute left-0 top-0">
          <path d="M165 0h35v200h-70l60-130-95 28z" fill="#14a044" opacity=".18" />
        </Ico>
        <div className="relative flex flex-col items-start pl-[15px] pt-[29px] leading-8">
          <Fit w={140}>Lyssna på din</Fit>
          <Fit w={134}>favoritmusik.</Fit>
          <Fit w={160}>Inga kreditkort.</Fit>
        </div>
        <div className="absolute bottom-[14px] right-5"><FaSpotify size={24} color="#f0fbf3" /></div>
      </Tile>
      <Tile label="Spela" w={57}>
        <div className="grid size-full grid-cols-3 grid-rows-3">
          <Cell bg="bg-[#bcbcbc]">
            <Ico w={48} h={48}>
              <path d="m10 0 38 10-9 38L0 38z" fill="#e2231a" />
              <path d="m21 19 8 2-2 8.500-8.500-2z" fill="#d8d8d8" />
            </Ico>
          </Cell>
          <Cell bg="bg-linear-to-tr from-[#04275c] via-[#0a6fb8] to-[#35c8f5] flex-col text-[16px] font-bold leading-[17px] text-white">
            <Fit w={43}>prime</Fit>
            <Fit w={43}>video</Fit>
            <Ico w={44} h={12} className="mt-px">
              <path d="M1 2q18 13 38 1" stroke="#fff" strokeWidth="2.400" />
              <path d="M35 1h7l-1 8" stroke="#fff" strokeWidth="2" />
            </Ico>
          </Cell>
          <Cell bg="bg-[#191919]">
            <Ico w={48} h={31}>
              <path d="M0 25h11v6H0z" fill="#f7a11a" />
              <path d="M12.500 25h10.500v6H12.500z" fill="#f5793a" />
              <path d="M12.500 17h10.500v6H12.500z" fill="#f09030" />
              <path d="M12.500 8.500h10.500v6H12.500z" fill="#e8a02a" />
              <path d="M24.500 25h10.500v6H24.500z" fill="#7a4bb8" />
              <path d="M24.500 17h10.500v6H24.500z" fill="#a83f8e" />
              <path d="M37 25h11v6H37z" fill="#1f62d8" />
              <path d="M37 17h11v6H37z" fill="#2286b8" />
              <path d="M37 8.500h11v6H37z" fill="#1fa88a" />
              <path d="M37 0h11v6H37z" fill="#22a45c" />
            </Ico>
          </Cell>
          <Cell><Game /></Cell>
          <Cell bg="bg-white">
            <div className="flex size-[46px] items-center justify-center rounded-[8px] bg-[#001e36] text-[25px] font-semibold leading-none text-[#4b9dff]">
              <Fit w={40}>PsX</Fit>
            </div>
          </Cell>
          <Cell bg="bg-white"><FaPinterest size={60} color="#e60023" /></Cell>
        </div>
      </Tile>
    </div>
  );
}

function StartMenu() {
  return (
    <div className="absolute bottom-[60px] left-0 flex h-[1280px] w-[1296px] overflow-hidden bg-[#3a3a3a] text-[23px] text-white">
      <Rail />
      <AppList />
      <div className="mt-6 h-[264px] w-[3px] bg-[#a8a8a8]" />
      <div className="ml-[14px] flex flex-col">
        <div className="mt-[41px] h-[57px] leading-8"><Fit w={136}>Produktivitet</Fit></div>
        <Productivity />
        <div className="mt-[23px] h-[57px] leading-8"><Fit w={88}>Utforska</Fit></div>
        <Explore />
        <div className="mt-20 flex h-[200px] w-[408px] items-center justify-center bg-[#0078d7] pb-1 pr-2 text-[96px] leading-none">
          <Fit w={282}>Surface</Fit>
        </div>
      </div>
    </div>
  );
}

/* ---------- taskbar ---------- */

const Task = ({ on, children }: Kids & { on?: boolean }) => (
  <div className="relative flex h-full w-[74px] items-center justify-center">
    {children}
    {on && <div className="absolute bottom-0 left-[9px] h-1 w-14 bg-[#76b9ed]" />}
  </div>
);

function Taskbar() {
  return (
    <div className="flex h-[60px] shrink-0 items-center bg-[#1c1c1c] text-[23px] text-white">
      <div className="flex h-full w-[72px] items-center justify-center bg-[#4a4a4a]">
        <Ico w={32} h={32}>
          <path d="M0 4.500 13 2.700V15.300H0zM14.200 2.500 32 0v15.300H14.200zM0 16.700h13v12.600L0 27.500zM14.200 16.700H32V32l-17.800-2.500z" fill="#fff" />
        </Ico>
      </div>
      <div className="ml-[5px] flex h-full">
        <Task>
          <Ico w={28} h={25}>
            <path d="M0 1q0-1 1-1h9l3 3H0z" fill="#d9920c" />
            <path d="M0 3h27q1 0 1 1v17H0z" fill="#fcd462" />
            <path d="M5 25V14q0-2 2-2h14q2 0 2 2v11h-5v-6h-8v6z" fill="#3a94d6" />
          </Ico>
        </Task>
        <Task on>
          <Ico w={30} h={30}>
            <circle cx="15" cy="15" r="15" fill="#fff" />
            <g strokeWidth="4" strokeLinecap="round">
              <path d="M12.300 6.200v.2M12.300 12H6" stroke="#36c5f0" />
              <path d="M18 6v6M23.800 12.200h.2" stroke="#2eb67d" />
              <path d="M18 17.800h6M17.800 23.500v.3" stroke="#ecb22e" />
              <path d="M12.200 18v6M6.200 17.800h.2" stroke="#e01e5a" />
            </g>
          </Ico>
        </Task>
        <Task on><Firefox s={31} id="t" /></Task>
        <Task on><OneNote w={32} h={27} /></Task>
      </div>
      <div className="ml-auto flex items-center">
        <Ico w={26} h={14}>
          <path d="M1 13 13 1l12 12" stroke="#fff" strokeWidth="2" />
        </Ico>
        <Ico w={28} h={28} className="ml-[37px]">
          <circle cx="14" cy="14" r="12.800" stroke="#fff" strokeWidth="2.200" />
          <circle cx="14" cy="14" r="6.200" fill="#fff" />
        </Ico>
        <Ico w={32} h={24} className="ml-[34px]">
          <path d="M2 1h28v18H2zM0 23h32" stroke="#fff" strokeWidth="2" />
          <path d="M16 5l6 7h-4.500v4h-3v-4H10z" fill="#fff" />
        </Ico>
        <div className="ml-8"><Cloud w={32} h={22} tones={["#8d8d8d", "#b5b5b5", "#c9c9c9", "#f1f1f1"]} /></div>
        <Ico w={30} h={18} className="ml-[34px]">
          <path d="M1 1h26v16H1z" stroke="#fff" strokeWidth="2" />
          <path d="M4 4h11.500v10H4zM28 6h2v6h-2z" fill="#fff" />
        </Ico>
        <Ico w={26} h={26} className="ml-[37px]">
          <path d="M1 25Q2 3 25 1.500M7 25Q8 9 25 7.500M13 25q1-11 12-11.500" stroke="#fff" strokeWidth="2" />
          <path d="M18 25q0-4.500 6-5v5z" fill="#fff" />
          <circle cx="22" cy="22.500" r="3" fill="#fff" />
        </Ico>
        <Ico w={28} h={24} className="ml-[33px]">
          <path d="M1 8h4l6-6v20l-6-6H1zM17 7l10 10M27 7 17 17" stroke="#fff" strokeWidth="1.900" />
        </Ico>
        <Ico w={34} h={32} className="ml-[35px]">
          <path d="M10 29 12 20 22 3q2-3 5-1t1 5L18 24zM12 20l6 4M21 5l6 4M10 29q-9 3-9-3 0-5 6-6M27 12q6 1 5 4-1 4-8 4" stroke="#fff" strokeWidth="2" />
        </Ico>
        <Fit w={46} className="ml-[27px]">SWE</Fit>
        <Fit w={57} className="ml-[27px]">22:54</Fit>
        <Ico w={32} h={32} className="ml-[37px]">
          <path d="M0 0h32v26H21l-5 6-5-6H0z" fill="#fff" />
          <path d="M6 7h20M6 13h20M6 19h12" stroke="#1c1c1c" strokeWidth="2" />
        </Ico>
        <div className="ml-[40px] mr-2 h-[60px] w-[2px] bg-[#6a6a6a]" />
      </div>
    </div>
  );
}

export default function App() {
  return (
    <div className="relative flex h-[2000px] w-[3000px] flex-col overflow-hidden bg-white font-['Open_Sans','Noto_Sans',sans-serif]">
      <TabBar />
      <NavBar />
      <Page />
      <div className="absolute bottom-[60px] left-0 h-[1280px] w-[1296px] shadow-[0_0_36px_rgba(0,0,0,0.4)]" />
      <StartMenu />
      <Taskbar />
    </div>
  );
}
